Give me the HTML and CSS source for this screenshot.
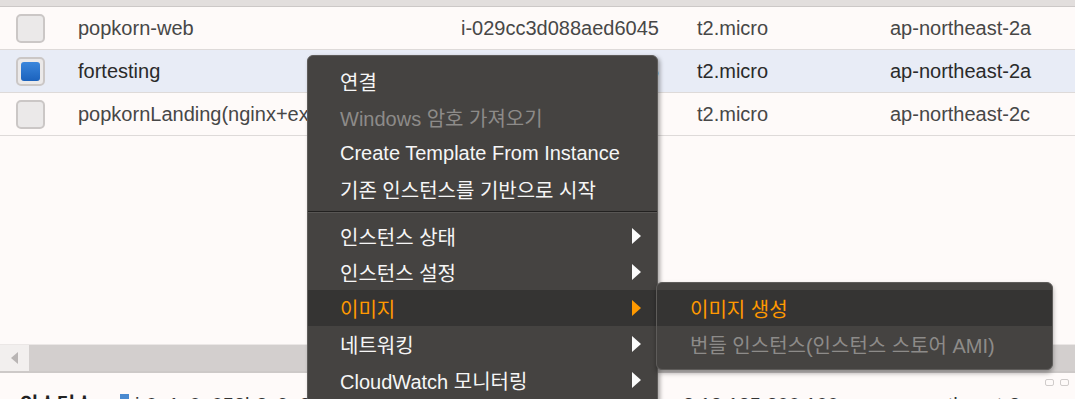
FILE: index.html
```html
<!DOCTYPE html>
<html lang="ko">
<head>
    <meta charset="UTF-8">
    <meta name="viewport" content="width=device-width, initial-scale=1.0">
    <title>Instances</title>
    <link rel="stylesheet" href="styles.css">
</head>
<body>
    <div class="page">
        <div class="table">
            <div class="head"></div>
            <div class="row">
                <div class="cell-check"><span class="check"></span></div>
                <span>popkorn-web</span>
                <span>i-029cc3d088aed6045</span>
                <span>t2.micro</span>
                <span>ap-northeast-2a</span>
            </div>
            <div class="row selected">
                <div class="cell-check"><span class="check on"></span></div>
                <span>fortesting</span>
                <span>i-0a1c0e058b3c9e2d5</span>
                <span>t2.micro</span>
                <span>ap-northeast-2a</span>
            </div>
            <div class="row">
                <div class="cell-check"><span class="check"></span></div>
                <span>popkornLanding(nginx+express)</span>
                <span></span>
                <span>t2.micro</span>
                <span>ap-northeast-2c</span>
            </div>
        </div>

        <div class="blank"></div>

        <div class="scrollbar">
            <div class="scroll-btn"><span class="left-arrow"></span></div>
            <div class="thumb"></div>
        </div>

        <div class="details">
            <div class="tools"><span></span><span></span></div>
            <div class="detail-line">
                <b>인스턴스:</b>
                <span class="id"><span class="dot"></span>i-0a1c0e058b3c9e2d5</span>
                <span>3.13.125.200.100</span>
                <span>ap-northeast-2a</span>
            </div>
        </div>

        <div class="menu">
            <div class="item">연결</div>
            <div class="item off">Windows 암호 가져오기</div>
            <div class="item">Create Template From Instance</div>
            <div class="item">기존 인스턴스를 기반으로 시작</div>
            <div class="sep"></div>
            <div class="item sub">인스턴스 상태<span class="tri"></span></div>
            <div class="item sub">인스턴스 설정<span class="tri"></span></div>
            <div class="item sub active">이미지<span class="tri"></span></div>
            <div class="item sub">네트워킹<span class="tri"></span></div>
            <div class="item sub">CloudWatch 모니터링<span class="tri"></span></div>
        </div>

        <div class="submenu">
            <div class="item active">이미지 생성</div>
            <div class="item off">번들 인스턴스(인스턴스 스토어 AMI)</div>
        </div>
    </div>
</body>
</html>
```

FILE: styles.css
```css
body {
    margin: 0;
    height: 399px;
    overflow: hidden;
    background: #fefaf9;
    font-family: "Liberation Sans", "Noto Sans CJK KR", sans-serif;
    font-size: 20px;
}

.page {
    position: relative;
    height: 399px;
    overflow: hidden;
}

.head {
    height: 6px;
    background: #e2dedd;
    border-bottom: 1px solid #ccc8c7;
}

.row {
    display: grid;
    grid-template-columns: 78px 383px 236px 193px 1fr;
    align-items: center;
    height: 42px;
    border-bottom: 1px solid #dedad9;
    color: #474747;
    white-space: nowrap;
    overflow: hidden;
}
.row.selected {
    background: #e8ecf6;
    color: #2a2a2a;
}
.row:first-of-type {
    height: 43px;
}

.cell-check {
    display: flex;
    padding-left: 16px;
}
.check {
    width: 25px;
    height: 25px;
    border: 2px solid #cbc7c6;
    border-radius: 5px;
    background: #ebe9e9;
    position: relative;
}
.check.on::after {
    content: "";
    position: absolute;
    left: 3px;
    top: 3px;
    right: 3px;
    bottom: 3px;
    border-radius: 3px;
    background: linear-gradient(#3a86dc, #1b62bd);
}

.blank {
    height: 208px;
}

.scrollbar {
    display: flex;
    height: 26px;
    border-top: 1px solid #ebe7e6;
    border-bottom: 2px solid #cdc9c8;
}
.scroll-btn {
    width: 29px;
    background: #f2efee;
    display: flex;
    align-items: center;
    padding-left: 11px;
    box-sizing: border-box;
}
.left-arrow {
    width: 0;
    height: 0;
    border-top: 6px solid transparent;
    border-bottom: 6px solid transparent;
    border-right: 7px solid #b9b5b4;
}
.thumb {
    flex: 1;
    background: #d3cfce;
}

.details {
    display: flex;
    flex-direction: column;
}
.tools {
    display: flex;
    justify-content: flex-end;
    gap: 6px;
    padding: 6px 6px 0 0;
    height: 7px;
}
.tools span {
    width: 7px;
    height: 5px;
    border: 1px solid #d0cccb;
    border-radius: 2px;
}
.detail-line {
    display: grid;
    grid-template-columns: 100px 563px 207px 1fr;
    padding: 7px 0 0 20px;
    line-height: 24px;
    color: #333;
    white-space: nowrap;
}
.detail-line b {
    color: #222;
}
.id {
    display: flex;
    align-items: flex-start;
    gap: 6px;
}
.dot {
    width: 9px;
    height: 16px;
    margin-top: 1px;
    background: #4a8ad0;
}

.menu {
    position: absolute;
    left: 307px;
    top: 55px;
    width: 349px;
    height: 380px;
    padding-top: 7px;
    background: #454341;
    border: 1px solid #5e5c5a;
    border-radius: 6px;
    box-shadow: 2px 2px 4px rgba(0, 0, 0, 0.35);
    z-index: 5;
}

.item {
    display: flex;
    align-items: center;
    justify-content: space-between;
    height: 36px;
    padding: 0 16px 0 32px;
    color: #f6f6f6;
    white-space: nowrap;
}
.item.off {
    color: #8d8b89;
}
.item.active {
    background: #353433;
    color: #ff9900;
}

.tri {
    width: 0;
    height: 0;
    border-top: 8px solid transparent;
    border-bottom: 8px solid transparent;
    border-left: 9px solid #fbfbfb;
}
.active .tri {
    border-left-color: #ff9900;
}

.sep {
    margin: 4px 0 5px;
    height: 1px;
    background: #222120;
    border-bottom: 1px solid #585654;
}

.submenu {
    position: absolute;
    left: 656px;
    top: 282px;
    width: 395px;
    padding: 7px 0;
    background: #454341;
    border: 1px solid #5e5c5a;
    border-radius: 6px;
    box-shadow: 0 3px 5px rgba(0, 0, 0, 0.35);
    z-index: 6;
}
.submenu .item {
    padding-left: 33px;
}
```
